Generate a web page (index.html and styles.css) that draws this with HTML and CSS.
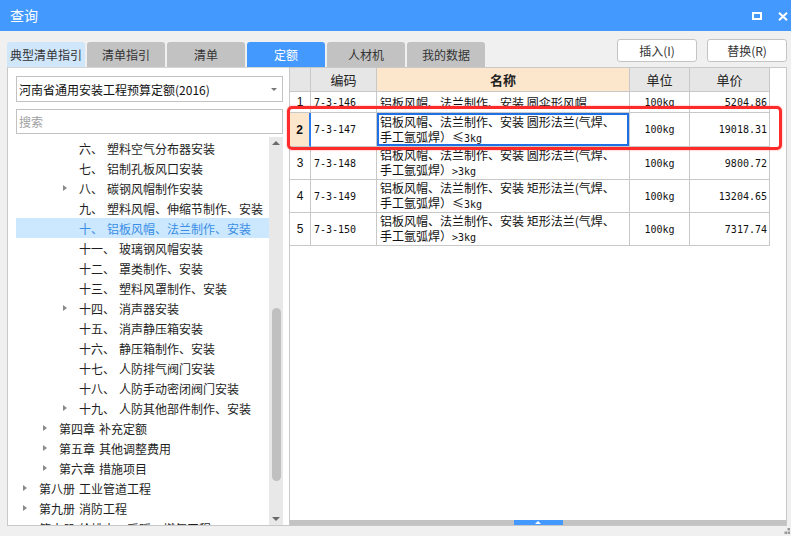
FILE: index.html
```html
<!DOCTYPE html>
<html lang="zh-CN">
<head>
<meta charset="utf-8">
<title>查询</title>
<link rel="stylesheet" href="styles.css">
</head>
<body>
<div class="win">
  <div class="titlebar">
    <span class="title">查询</span>
    <div class="winctl">
      <svg class="ico-max" width="10" height="8" viewBox="0 0 10 8"><rect x="1" y="1" width="8" height="6" fill="none" stroke="#fff" stroke-width="2"/></svg>
      <svg class="ico-close" width="10" height="9" viewBox="0 0 10 9"><path d="M1 0.8 L9 8.2 M9 0.8 L1 8.2" stroke="#fff" stroke-width="2" fill="none"/></svg>
    </div>
  </div>

  <div class="toolbar">
    <div class="tabs">
      <div class="tab tab-light">典型清单指引</div>
      <div class="tab">清单指引</div>
      <div class="tab">清单</div>
      <div class="tab tab-active">定额</div>
      <div class="tab">人材机</div>
      <div class="tab">我的数据</div>
    </div>
    <div class="actions">
      <button class="btn">插入(I)</button>
      <button class="btn">替换(R)</button>
    </div>
  </div>

  <div class="main">
    <div class="left">
      <div class="select"><span>河南省通用安装工程预算定额(2016)</span><span class="caret"></span></div>
      <div class="search">搜索</div>
      <div class="treewrap">
        <div class="tree">
          <div class="row l3"><span class="tw"></span><span class="no">六、</span><span>塑料空气分布器安装</span></div>
          <div class="row l3"><span class="tw"></span><span class="no">七、</span><span>铝制孔板风口安装</span></div>
          <div class="row l3"><span class="tw arrow"></span><span class="no">八、</span><span>碳钢风帽制作安装</span></div>
          <div class="row l3"><span class="tw"></span><span class="no">九、</span><span>塑料风帽、伸缩节制作、安装</span></div>
          <div class="row l3 sel"><span class="tw"></span><span class="no">十、</span><span>铝板风帽、法兰制作、安装</span></div>
          <div class="row l3"><span class="tw"></span><span class="no">十一、</span><span>玻璃钢风帽安装</span></div>
          <div class="row l3"><span class="tw"></span><span class="no">十二、</span><span>罩类制作、安装</span></div>
          <div class="row l3"><span class="tw"></span><span class="no">十三、</span><span>塑料风罩制作、安装</span></div>
          <div class="row l3"><span class="tw arrow"></span><span class="no">十四、</span><span>消声器安装</span></div>
          <div class="row l3"><span class="tw"></span><span class="no">十五、</span><span>消声静压箱安装</span></div>
          <div class="row l3"><span class="tw"></span><span class="no">十六、</span><span>静压箱制作、安装</span></div>
          <div class="row l3"><span class="tw"></span><span class="no">十七、</span><span>人防排气阀门安装</span></div>
          <div class="row l3"><span class="tw"></span><span class="no">十八、</span><span>人防手动密闭阀门安装</span></div>
          <div class="row l3"><span class="tw arrow"></span><span class="no">十九、</span><span>人防其他部件制作、安装</span></div>
          <div class="row l2"><span class="tw arrow"></span><span class="no">第四章</span><span>补充定额</span></div>
          <div class="row l2"><span class="tw arrow"></span><span class="no">第五章</span><span>其他调整费用</span></div>
          <div class="row l2"><span class="tw arrow"></span><span class="no">第六章</span><span>措施项目</span></div>
          <div class="row l1"><span class="tw arrow"></span><span class="no">第八册</span><span>工业管道工程</span></div>
          <div class="row l1"><span class="tw arrow"></span><span class="no">第九册</span><span>消防工程</span></div>
          <div class="row l1"><span class="tw arrow"></span><span class="no">第十册</span><span>给排水、采暖、燃气工程</span></div>
        </div>
        <div class="vscroll">
          <div class="sb-arrow"><span class="tri-up"></span></div>
          <div class="sb-track"><div class="sb-thumb"></div></div>
          <div class="sb-arrow"><span class="tri-down"></span></div>
        </div>
      </div>
    </div>

    <div class="right">
      <div class="grid">
        <div class="c h rn"></div>
        <div class="c h ctr">编码</div>
        <div class="c h ctr hname">名称</div>
        <div class="c h ctr">单位</div>
        <div class="c h ctr">单价</div>

        <div class="c r1 rn">1</div>
        <div class="c r1 code mono">7-3-146</div>
        <div class="c r1 name"><span class="txt">铝板风帽、法兰制作、安装 圆伞形风帽</span></div>
        <div class="c r1 ctr mono">100kg</div>
        <div class="c r1 price mono">5204.86</div>

        <div class="c r2 rn rn-sel">2</div>
        <div class="c r2 code mono">7-3-147</div>
        <div class="c r2 name name-sel"><span class="txt">铝板风帽、法兰制作、安装 圆形法兰(气焊、<br>手工氩弧焊）≤<span class="mono">3kg</span></span></div>
        <div class="c r2 ctr mono">100kg</div>
        <div class="c r2 price mono">19018.31</div>

        <div class="c rr rn">3</div>
        <div class="c rr code mono">7-3-148</div>
        <div class="c rr name"><span class="txt">铝板风帽、法兰制作、安装 圆形法兰(气焊、<br>手工氩弧焊）<span class="mono">&gt;3kg</span></span></div>
        <div class="c rr ctr mono">100kg</div>
        <div class="c rr price mono">9800.72</div>

        <div class="c rr rn">4</div>
        <div class="c rr code mono">7-3-149</div>
        <div class="c rr name"><span class="txt">铝板风帽、法兰制作、安装 矩形法兰(气焊、<br>手工氩弧焊）≤<span class="mono">3kg</span></span></div>
        <div class="c rr ctr mono">100kg</div>
        <div class="c rr price mono">13204.65</div>

        <div class="c rr rn">5</div>
        <div class="c rr code mono">7-3-150</div>
        <div class="c rr name"><span class="txt">铝板风帽、法兰制作、安装 矩形法兰(气焊、<br>手工氩弧焊）<span class="mono">&gt;3kg</span></span></div>
        <div class="c rr ctr mono">100kg</div>
        <div class="c rr price mono">7317.74</div>
      </div>
      <div class="hbar"><div class="hthumb"><span class="tri-up-w"></span></div></div>
    </div>

    <div class="redbox"></div>
  </div>

  <div class="statusbar">
    <svg class="grip" width="6" height="7" viewBox="0 0 6 7"><rect x="3.5" y="0" width="2.5" height="2.5" fill="#9a9a9a"/><rect x="0.5" y="3.5" width="2.5" height="2.5" fill="#9a9a9a"/><rect x="3.5" y="3.5" width="2.5" height="2.5" fill="#9a9a9a"/></svg>
  </div>
</div>
</body>
</html>
```

FILE: styles.css
```css
* { box-sizing: border-box; }

html, body {
  margin: 0;
  padding: 0;
}

body {
  width: 791px;
  height: 536px;
  overflow: hidden;
  background: #f0f0f0;
  font-family: "Noto Sans CJK SC", "Noto Sans", sans-serif;
  font-size: 12px;
  color: #222;
}

.win {
  width: 791px;
  height: 536px;
  display: flex;
  flex-direction: column;
}

/* title bar */
.titlebar {
  height: 31px;
  flex: none;
  background: #4499ff;
  display: flex;
  align-items: center;
  padding: 0 3px 0 10px;
}
.title {
  color: #fff;
  font-size: 14px;
  line-height: 31px;
}
.winctl {
  margin-left: auto;
  display: flex;
  align-items: center;
  gap: 16px;
}
.ico-max { display: block; }
.ico-close { display: block; margin-top: 1px; }

/* toolbar / tabs */
.toolbar {
  height: 36px;
  flex: none;
  display: flex;
  align-items: flex-start;
  padding-left: 7px;
}
.tabs {
  display: flex;
  gap: 2px;
  margin-top: 11px;
}
.tab {
  width: 78px;
  height: 25px;
  line-height: 25px;
  text-align: center;
  background: #c2c2c2;
  color: #333;
  border-radius: 3px 3px 0 0;
  font-size: 12px;
}
.tab-light { background: #cfe6fb; }
.tab-active { background: #4499ff; color: #fff; }

.actions {
  margin-left: auto;
  margin-top: 8px;
  padding-right: 4px;
  display: flex;
  gap: 10px;
}
.btn {
  width: 80px;
  height: 23px;
  border: 1px solid #c4c4c4;
  border-radius: 3px;
  background: #fff;
  color: #333;
  font-family: "Noto Sans CJK SC", "Noto Sans", sans-serif;
  font-size: 12px;
  padding: 0;
  line-height: 21px;
}

/* main */
.main {
  height: 459px;
  flex: none;
  display: flex;
  position: relative;
}

.left {
  width: 282px;
  margin-left: 7px;
  background: #fff;
  border-left: 1px solid #c8c8c8;
  border-top: 1px solid #d6d6d6;
  border-bottom: 1px solid #c8c8c8;
  padding: 8px 6px 0 8px;
  display: flex;
  flex-direction: column;
}
.select {
  height: 26px;
  border: 1px solid #c2c2c2;
  display: flex;
  align-items: center;
  padding-left: 2px;
  padding-right: 5px;
  color: #111;
  font-size: 12px;
  flex: none;
}
.caret {
  margin-left: auto;
  width: 0;
  height: 0;
  border-left: 3px solid transparent;
  border-right: 3px solid transparent;
  border-top: 3px solid #777;
}
.search {
  margin-top: 7px;
  height: 25px;
  border: 1px solid #c2c2c2;
  color: #a0a0a0;
  padding-left: 2px;
  line-height: 23px;
  flex: none;
}
.treewrap {
  margin-top: 3px;
  flex: 1;
  display: flex;
  min-height: 0;
}
.tree {
  width: 253px;
  overflow: hidden;
  padding-top: 1px;
}
.row {
  height: 20px;
  display: flex;
  align-items: center;
  white-space: nowrap;
  color: #1e1e1e;
  font-size: 12px;
}
.row.l1 { padding-left: 0; }
.row.l2 { padding-left: 20px; }
.row.l3 { padding-left: 40px; }
.row.sel { background: #cce8ff; color: #3a8ee6; }
.tw {
  width: 23px;
  flex: none;
  display: flex;
  align-items: center;
  padding-left: 7px;
  height: 20px;
}
.tw.arrow::before {
  content: "";
  width: 0;
  height: 0;
  border-top: 3.5px solid transparent;
  border-bottom: 3.5px solid transparent;
  border-left: 4px solid #8a8a8a;
}
.no { margin-right: 4px; }

.vscroll {
  width: 14px;
  flex: none;
  background: #e8e8e8;
  display: flex;
  flex-direction: column;
}
.sb-arrow {
  height: 12px;
  flex: none;
  display: flex;
  align-items: center;
  justify-content: center;
}
.tri-up {
  width: 0; height: 0;
  border-left: 4px solid transparent;
  border-right: 4px solid transparent;
  border-bottom: 4px solid #6a6a6a;
}
.tri-down {
  width: 0; height: 0;
  border-left: 4px solid transparent;
  border-right: 4px solid transparent;
  border-top: 4px solid #6a6a6a;
}
.sb-track {
  flex: 1;
  padding-top: 159px;
  padding-left: 3px;
}
.sb-thumb {
  width: 9px;
  height: 173px;
  border-radius: 5px;
  background: #c0c0c0;
}

/* right panel */
.right {
  width: 498px;
  background: #fff;
  border: 1px solid #c8c8c8;
  display: flex;
  flex-direction: column;
}
.grid {
  flex: 1;
  display: grid;
  grid-template-columns: 21px 66px 253px 60px 80px;
  grid-template-rows: 24px 21px 34px 33px 33px 33px;
  align-content: start;
  width: 480px;
}
.c {
  border-right: 1px solid #c8c8c8;
  border-bottom: 1px solid #c8c8c8;
  display: flex;
  align-items: center;
  font-size: 12px;
  color: #111;
  overflow: hidden;
  white-space: nowrap;
}
.h {
  background: #e6e6e6;
  font-size: 13px;
  color: #222;
}
.hname { background: #fde7cc; font-weight: bold; }
.ctr { justify-content: center; }
.rn { justify-content: center; font-family: "Liberation Sans", sans-serif; font-size: 12px; }
.h.rn { background: #e6e6e6; }
.rn-sel {
  background: #fde7cc;
  font-weight: bold;
  border-right: 2px solid #2b7cf0;
}
.code { padding-left: 3px; }
.price { justify-content: flex-end; padding-right: 2px; }
.name { padding-left: 3px; line-height: 15px; }
.txt { display: block; }
.name-sel { box-shadow: inset 0 0 0 2px #1f6fe5; }
.mono {
  font-family: "DejaVu Sans Mono", monospace;
  font-size: 10px;
  letter-spacing: 0;
}

.hbar {
  height: 5px;
  flex: none;
  background: #c3c3c3;
  display: flex;
  justify-content: center;
}
.hthumb {
  width: 49px;
  height: 5px;
  background: #4499ff;
  display: flex;
  justify-content: center;
  align-items: flex-end;
  padding-bottom: 1px;
}
.tri-up-w {
  width: 0; height: 0;
  border-left: 3px solid transparent;
  border-right: 3px solid transparent;
  border-bottom: 3px solid #fff;
}

.redbox {
  position: absolute;
  left: 287px;
  top: 39px;
  width: 495px;
  height: 44px;
  border: 3px solid #ff2b2b;
  border-radius: 5px;
  box-shadow: 0 0 2px rgba(255, 40, 40, 0.5);
  pointer-events: none;
}

.statusbar {
  height: 10px;
  flex: none;
  display: flex;
  justify-content: flex-end;
  align-items: flex-end;
  padding-right: 1px;
  padding-bottom: 1px;
}
.grip { display: block; }
```
